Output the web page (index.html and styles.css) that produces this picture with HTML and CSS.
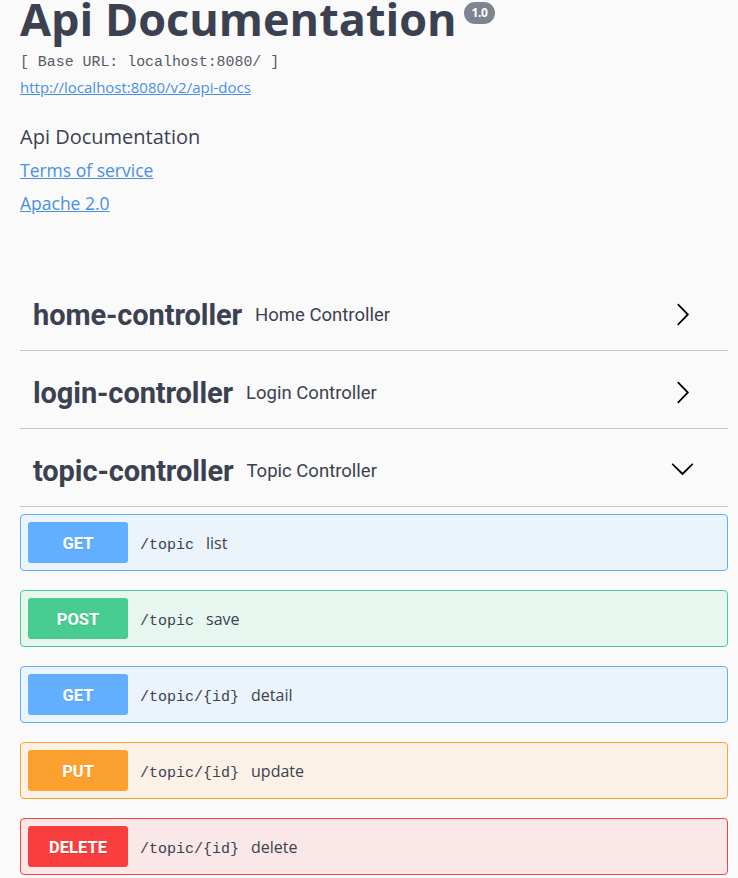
FILE: index.html
```html
<!DOCTYPE html>
<html>
<head>
<meta charset="utf-8">
<link rel="stylesheet" href="styles.css">
</head>
<body>
<div class="wrap">
  <section class="info">
    <div class="title-row">
      <h1 class="title">Api Documentation</h1>
      <span class="version">1.0</span>
    </div>
    <div class="base-url">[ Base URL: localhost:8080/ ]</div>
    <a class="doc-link" href="#">http://localhost:8080/v2/api-docs</a>
    <div class="desc">Api Documentation</div>
    <a class="info-link" href="#">Terms of service</a>
    <a class="info-link" href="#">Apache 2.0</a>
  </section>

  <section class="tags">
    <div class="tag">
      <span class="tag-name">home-controller</span>
      <span class="tag-desc">Home Controller</span>
      <svg class="arrow" viewBox="0 0 20 20" width="25" height="25"><path d="M13.25 10L6.109 2.58c-.268-.27-.268-.707 0-.979.268-.27.701-.27.969 0l7.83 7.908c.268.271.268.709 0 .979l-7.83 7.908c-.268.271-.701.27-.969 0-.268-.269-.268-.707 0-.979L13.25 10z"/></svg>
    </div>
    <div class="tag">
      <span class="tag-name">login-controller</span>
      <span class="tag-desc">Login Controller</span>
      <svg class="arrow" viewBox="0 0 20 20" width="25" height="25"><path d="M13.25 10L6.109 2.58c-.268-.27-.268-.707 0-.979.268-.27.701-.27.969 0l7.83 7.908c.268.271.268.709 0 .979l-7.83 7.908c-.268.271-.701.27-.969 0-.268-.269-.268-.707 0-.979L13.25 10z"/></svg>
    </div>
    <div class="tag">
      <span class="tag-name">topic-controller</span>
      <span class="tag-desc">Topic Controller</span>
      <svg class="arrow down" viewBox="0 0 20 20" width="25" height="25"><path d="M17.418 6.109c.272-.268.709-.268.979 0s.271.701 0 .969l-7.908 7.83c-.27.268-.707.268-.979 0l-7.908-7.830c-.27-.268-.27-.701 0-.969.271-.268.709-.268.979 0L10 13.25l7.418-7.141z"/></svg>
    </div>

    <div class="ops">
      <div class="op get">
        <span class="method">GET</span>
        <div class="op-text"><span class="path">/topic</span><span class="summary">list</span></div>
      </div>
      <div class="op post">
        <span class="method">POST</span>
        <div class="op-text"><span class="path">/topic</span><span class="summary">save</span></div>
      </div>
      <div class="op get">
        <span class="method">GET</span>
        <div class="op-text"><span class="path">/topic/{id}</span><span class="summary">detail</span></div>
      </div>
      <div class="op put">
        <span class="method">PUT</span>
        <div class="op-text"><span class="path">/topic/{id}</span><span class="summary">update</span></div>
      </div>
      <div class="op delete">
        <span class="method">DELETE</span>
        <div class="op-text"><span class="path">/topic/{id}</span><span class="summary">delete</span></div>
      </div>
    </div>
  </section>
</div>
</body>
</html>
```

FILE: styles.css
```css
html, body {
  margin: 0;
  padding: 0;
  background: #fafafa;
}
body {
  font-family: "Open Sans", "DejaVu Sans", sans-serif;
  color: #3b4151;
}
.wrap {
  padding: 0 10px 0 20px;
}
.info {
  display: flex;
  flex-direction: column;
  align-items: flex-start;
}
.title-row {
  display: flex;
  align-items: flex-start;
  margin-top: -4px;
}
.title {
  margin: 0;
  font-size: 45px;
  line-height: 45px;
  font-weight: 700;
  color: #3b4151;
}
.version {
  margin-left: 7px;
  margin-top: 6px;
  background: #7d8492;
  color: #fff;
  font-size: 12px;
  font-weight: 700;
  line-height: 22px;
  height: 22px;
  padding: 0 8px;
  border-radius: 57px;
  font-family: "Open Sans", sans-serif;
  letter-spacing: -0.5px;
}
.base-url {
  margin-top: 11px;
  font-family: "Liberation Mono", monospace;
  font-size: 14.9px;
  line-height: 20px;
  color: #555a66;
}
.doc-link {
  margin-top: 5px;
  font-size: 15px;
  line-height: 20px;
  color: #4990e2;
}
.desc {
  margin-top: 28px;
  font-size: 20px;
  line-height: 24px;
}
.info-link {
  margin-top: 9px;
  font-size: 17.5px;
  line-height: 24px;
  color: #4990e2;
}
.tags {
  margin-top: 58px;
}
.tag {
  display: flex;
  align-items: center;
  height: 70px;
  padding: 7px 33px 0 13px;
  border-bottom: 1px solid #c5c7cc;
}
.tag-name {
  font-family: "Roboto", sans-serif;
  font-weight: 700;
  font-size: 29px;
  letter-spacing: -0.1px;
  color: #3b4151;
}
.tag-desc {
  margin-left: 13px;
  flex: 1;
  font-family: "Roboto", sans-serif;
  font-size: 18.5px;
  color: #3b4151;
}
.arrow {
  fill: #000;
  margin-bottom: 2px;
}
.arrow.down {
  margin-bottom: 6px;
}
.ops {
  padding-top: 7px;
}
.op {
  display: flex;
  align-items: center;
  border: 1px solid;
  border-radius: 4px;
  padding: 7px 7px;
  margin-bottom: 19px;
}
.method {
  width: 100px;
  height: 41px;
  line-height: 43px;
  text-align: center;
  border-radius: 3px;
  color: #fff;
  font-family: "Roboto", sans-serif;
  font-weight: 700;
  font-size: 16.5px;
  text-shadow: 0 1px 0 rgba(0, 0, 0, .1);
}
.op-text {
  display: flex;
  align-items: baseline;
}
.path {
  margin-left: 12px;
  font-family: "Liberation Mono", monospace;
  font-size: 15px;
  color: #3b4151;
}
.summary {
  margin-left: 12px;
  font-size: 16px;
  color: #3b4151;
}
.get { background: #ebf3fb; border-color: #61affe; }
.get .method { background: #61affe; }
.post { background: #e8f6f0; border-color: #49cc90; }
.post .method { background: #49cc90; }
.put { background: #fbf1e6; border-color: #fca130; }
.put .method { background: #fca130; }
.delete { background: #fae7e7; border-color: #f93e3e; }
.delete .method { background: #f93e3e; }
```
